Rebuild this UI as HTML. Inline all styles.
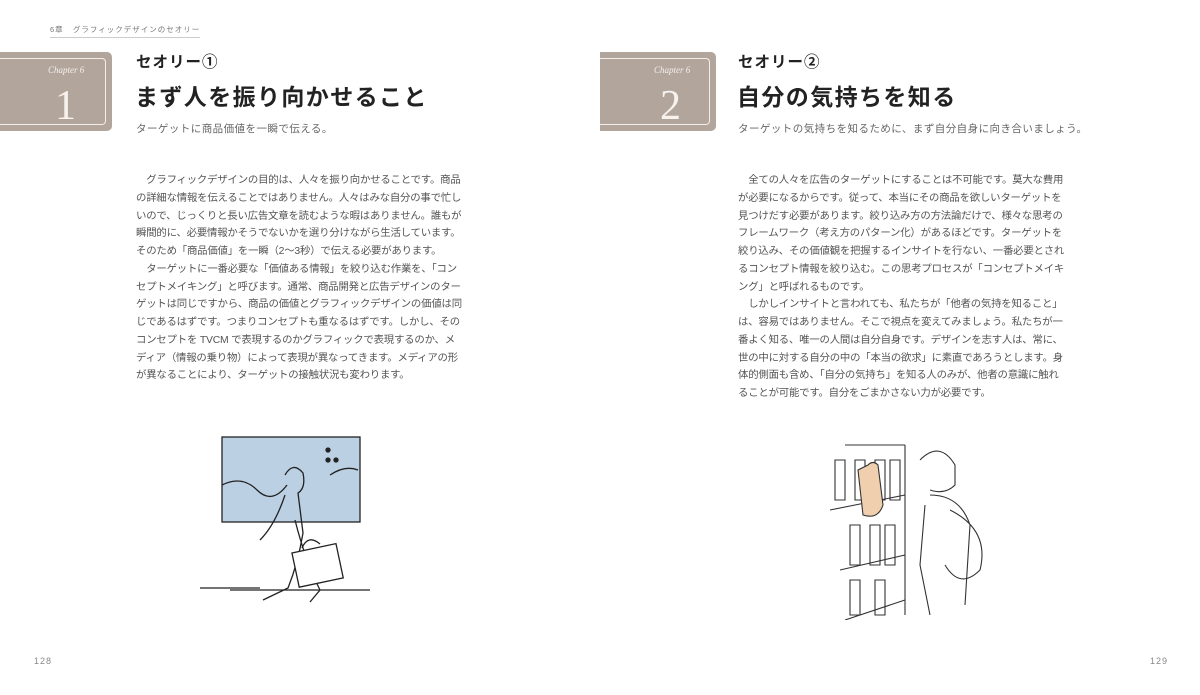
<!DOCTYPE html>
<html><head><meta charset="utf-8"><style>
body{margin:0;width:1200px;height:695px;background:#fff;position:relative;overflow:hidden;font-family:"Liberation Sans","Noto Sans CJK JP",sans-serif;color:#333}
.abs{position:absolute}
.box{position:absolute;top:52px;height:79px;background:#b2a59c;border-radius:0 5px 5px 0}
.box .in{position:absolute;top:6px;bottom:6px;border:1px solid #f3eeea;border-left:none;border-radius:0 4px 4px 0}
.ch{position:absolute;font-family:"Liberation Serif",serif;font-style:italic;color:#f5f0ec;font-size:9px}
.num{position:absolute;font-family:"Liberation Serif",serif;color:#f7f2ee;font-size:42px;line-height:42px}
.t1{font-size:15.5px;font-weight:bold;color:#222;letter-spacing:1px;white-space:nowrap}
.t2{font-size:23px;font-weight:bold;color:#222;letter-spacing:1.4px;white-space:nowrap}
.sub{font-size:10.5px;color:#666;letter-spacing:0.45px;white-space:nowrap}
.body{font-size:10.4px;line-height:17.75px;color:#555;letter-spacing:-0.2px;white-space:nowrap}
</style></head><body>
<div class="abs" style="left:50px;top:24px;font-size:7.5px;color:#777;letter-spacing:1px;border-bottom:1px solid #ccc;padding-bottom:2px">6章&nbsp;&nbsp;&nbsp;グラフィックデザインのセオリー</div>

<div class="box" style="left:0;width:112px"><div class="in" style="left:0;right:6px"></div>
<div class="ch" style="left:48px;top:13px">Chapter 6</div><div class="num" style="left:55px;top:33px">1</div></div>
<div class="abs t1" style="left:136px;top:50px">セオリー①</div>
<div class="abs t2" style="left:135px;top:78px">まず人を振り向かせること</div>
<div class="abs sub" style="left:136px;top:121px">ターゲットに商品価値を一瞬で伝える。</div>
<div class="abs body" style="left:136px;top:172px">　グラフィックデザインの目的は、人々を振り向かせることです。商品<br>の詳細な情報を伝えることではありません。人々はみな自分の事で忙し<br>いので、じっくりと長い広告文章を読むような暇はありません。誰もが<br>瞬間的に、必要情報かそうでないかを選り分けながら生活しています。<br>そのため「商品価値」を一瞬（2～3秒）で伝える必要があります。<br>　ターゲットに一番必要な「価値ある情報」を絞り込む作業を、「コン<br>セプトメイキング」と呼びます。通常、商品開発と広告デザインのター<br>ゲットは同じですから、商品の価値とグラフィックデザインの価値は同<br>じであるはずです。つまりコンセプトも重なるはずです。しかし、その<br>コンセプトを TVCM で表現するのかグラフィックで表現するのか、メ<br>ディア（情報の乗り物）によって表現が異なってきます。メディアの形<br>が異なることにより、ターゲットの接触状況も変わります。</div>

<div class="box" style="left:600px;width:116px"><div class="in" style="left:0;right:6px"></div>
<div class="ch" style="left:54px;top:13px">Chapter 6</div><div class="num" style="left:60px;top:33px">2</div></div>
<div class="abs t1" style="left:738px;top:50px">セオリー②</div>
<div class="abs t2" style="left:737px;top:78px">自分の気持ちを知る</div>
<div class="abs sub" style="left:738px;top:121px">ターゲットの気持ちを知るために、まず自分自身に向き合いましょう。</div>
<div class="abs body" style="left:738px;top:172px">　全ての人々を広告のターゲットにすることは不可能です。莫大な費用<br>が必要になるからです。従って、本当にその商品を欲しいターゲットを<br>見つけだす必要があります。絞り込み方の方法論だけで、様々な思考の<br>フレームワーク（考え方のパターン化）があるほどです。ターゲットを<br>絞り込み、その価値観を把握するインサイトを行ない、一番必要とされ<br>るコンセプト情報を絞り込む。この思考プロセスが「コンセプトメイキ<br>ング」と呼ばれるものです。<br>　しかしインサイトと言われても、私たちが「他者の気持を知ること」<br>は、容易ではありません。そこで視点を変えてみましょう。私たちが一<br>番よく知る、唯一の人間は自分自身です。デザインを志す人は、常に、<br>世の中に対する自分の中の「本当の欲求」に素直であろうとします。身<br>体的側面も含め、「自分の気持ち」を知る人のみが、他者の意識に触れ<br>ることが可能です。自分をごまかさない力が必要です。</div>

<svg class="abs" style="left:200px;top:420px" width="180" height="200" viewBox="0 0 180 200" fill="none" stroke="#222" stroke-width="1.3">
<rect x="22" y="17" width="138" height="85" fill="#bcd0e3"/>
<path d="M22 65 q20-10 35 5 q15 15 30-5 M130 55 q15-10 28-5"/>
<path d="M30 170 h140 M0 168 h60"/>
<path d="M85 55 q8-14 18-2 q3 15-5 20 l5 40 q-5 30-15 55 l-25 12 M95 100 q10 40 25 70 l-10 12 M85 75 q-10 30-25 45"/>
<rect x="95" y="128" width="45" height="35" fill="#fff" transform="rotate(-12 117 145)"/>
<path d="M102 128 q6-14 18-4"/>
<circle cx="128" cy="30" r="2" fill="#222"/><circle cx="128" cy="40" r="2" fill="#222"/><circle cx="136" cy="40" r="2" fill="#222"/>
</svg>

<svg class="abs" style="left:820px;top:430px" width="170" height="190" viewBox="0 0 170 190" fill="none" stroke="#333" stroke-width="1.1">
<path d="M25 15 h60 M10 80 l75-15 M20 140 l65-15 M25 190 l60-20 M85 15 v170"/>
<path d="M15 30 v40 h10 v-40z M35 30 v40 h10 v-40z M55 30 v40 h10 v-40z M70 30 v40 h10 v-40z M30 95 v40 h10 v-40z M50 95 v40 h10 v-40z M65 95 v40 h10 v-40z M30 150 v35 h10 v-35z M55 150 v35 h10 v-35z"/>
<path d="M48 35 q5-5 10 0 l5 40 q-5 15-20 10 l-5-45z" fill="#f0cfae"/>
<path d="M100 30 q20-20 35 5 l0 20 q-10 10-25 5 M110 65 q30 0 40 30 l-5 80 M105 75 l-5 60 l10 50 M130 80 q40 20 30 60 q-20 20-35-5"/>
</svg>

<div class="abs" style="left:34px;top:656px;font-size:9px;color:#888;letter-spacing:1px">128</div>
<div class="abs" style="left:1150px;top:656px;font-size:9px;color:#888;letter-spacing:1px">129</div>
</body></html>
